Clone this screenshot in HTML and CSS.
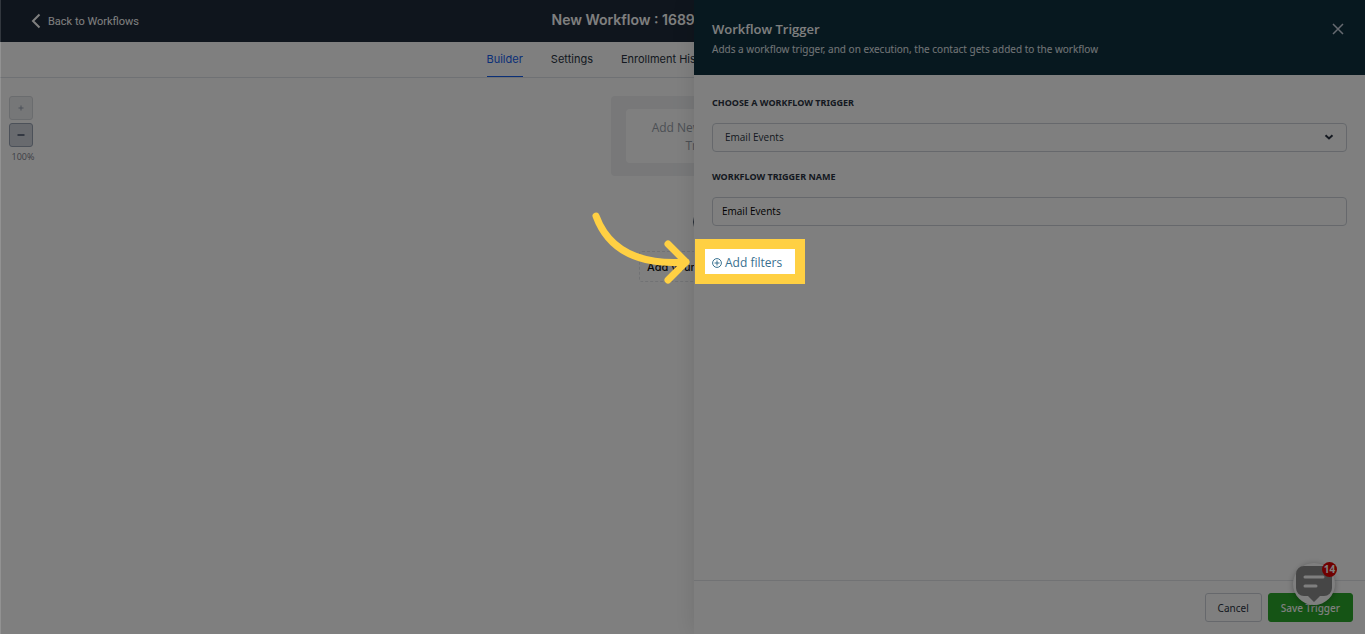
FILE: index.html
```html
<!DOCTYPE html>
<html lang="en">
<head>
<meta charset="utf-8">
<title>Workflow Trigger</title>
<link rel="stylesheet" href="styles.css">
</head>
<body>
<div class="app">
  <header class="topbar">
    <a class="back" href="#">
      <svg class="back-icon" viewBox="0 0 10 16" aria-hidden="true"><path d="M8.500 1.500 2 8l6.500 6.500"/></svg>
      Back to Workflows
    </a>
    <h1 class="title">New Workflow : 1689</h1>
  </header>
  <nav class="tabs">
    <div class="tab-list">
      <a class="tab tab-active" href="#">Builder</a>
      <a class="tab" href="#">Settings</a>
      <a class="tab" href="#">Enrollment History</a>
    </div>
  </nav>
  <main class="workspace">
    <div class="zoom-tools">
      <button class="zoom-btn zoom-disabled" type="button" aria-label="Zoom in" disabled><svg viewBox="0 0 8 8" aria-hidden="true"><path d="M4 1.500v5M1.500 4h5"/></svg></button>
      <button class="zoom-btn" type="button" aria-label="Zoom out"><svg viewBox="0 0 8 8" aria-hidden="true"><path d="M.5 4h7"/></svg></button>
      <span class="zoom-level">100%</span>
    </div>
    <div class="canvas">
      <div class="trigger-card"><button class="trigger-add" type="button">Add New Workflow Trigger</button></div>
      <button class="plus" type="button" aria-label="Add step"><svg viewBox="0 0 26 26" aria-hidden="true"><circle cx="13" cy="13" r="11.500"/><path d="M13 7v12M7 13h12"/></svg></button>
      <button class="action-add" type="button">Add your</button>
    </div>
  </main>
</div>

<aside class="drawer">
  <header class="drawer-head">
    <div>
      <h2 class="drawer-title">Workflow Trigger</h2>
      <p class="drawer-sub">Adds a workflow trigger, and on execution, the contact gets added to the workflow</p>
    </div>
    <button class="close" type="button" aria-label="Close"><svg viewBox="0 0 12 12" aria-hidden="true"><path d="m1 1 10 10M11 1 1 11"/></svg></button>
  </header>
  <form class="drawer-body">
    <label class="label" for="trigger">CHOOSE A WORKFLOW TRIGGER</label>
    <div class="select-wrap">
      <select class="field field-select" id="trigger"><option>Email Events</option></select>
      <svg class="chevron" viewBox="0 0 10 8" aria-hidden="true"><path d="m1.500 2.200 3.500 3.300 3.500-3.300"/></svg>
    </div>
    <label class="label" for="name">WORKFLOW TRIGGER NAME</label>
    <input class="field" id="name" type="text" value="Email Events">
    <div class="filters">
      <button class="add-filters" type="button">
        <svg class="filter-icon" viewBox="0 0 10 10" aria-hidden="true"><circle cx="5" cy="5" r="4.400"/><path d="M5 2.500v5M2.500 5h5"/></svg>
        Add filters
      </button>
      <div class="spotlight"></div>
      <svg class="arrow" viewBox="0 0 100 76" aria-hidden="true"><path d="M4 6C18 44 52 55 94 52M76 34l18 18-18 18"/></svg>
    </div>
  </form>
  <footer class="drawer-foot">
    <button class="btn" type="button">Cancel</button>
    <button class="btn btn-save" type="button">Save Trigger</button>
  </footer>
</aside>

<button class="chat" type="button" aria-label="Open chat">
  <svg viewBox="0 0 36 36" aria-hidden="true"><path d="M8 0h20a8 8 0 0 1 8 8v14a8 8 0 0 1-8 8h-4l-6 6-6-6H8a8 8 0 0 1-8-8V8a8 8 0 0 1 8-8z"/><path class="chat-line" d="M9 11h18M9 20h11"/></svg>
  <span class="chat-count">14</span>
</button>
</body>
</html>
```
FILE: styles.css
```css
* { box-sizing: border-box; }

body {
  margin: 0;
  min-height: 100vh;
  overflow: hidden;
  background: #fff;
  color: #2a3342;
  font-family: "Open Sans", "Noto Sans", sans-serif;
  font-size: 11px;
}

/* light hairline along the window edge, above the dimming */
body::after {
  content: "";
  position: absolute;
  top: 0;
  bottom: 0;
  left: 0;
  z-index: 12;
  width: 1px;
  background: rgba(255, 255, 255, .15);
}

button, input, select { font: inherit; color: inherit; }
button { padding: 0; border: 0; background: none; }
a { color: inherit; text-decoration: none; }
h1, h2, p { margin: 0; }
svg { display: block; fill: none; stroke: currentColor; }

.app {
  display: flex;
  flex-direction: column;
  min-height: 100vh;
}

.topbar {
  position: relative;
  display: flex;
  align-items: center;
  height: 42px;
  padding-left: 31px;
  background: #1e2a3a;
  color: #fff;
}
.back { display: flex; align-items: center; gap: 7px; font-family: Roboto, sans-serif; }
.back-icon { width: 10px; height: 16px; stroke-width: 2; }
.title {
  position: absolute;
  top: 10px;
  left: 50%;
  width: 262px;
  margin-left: -131px;
  font: 600 14px/20px Inter, sans-serif;
}

.tabs { border-bottom: 1px solid #dfe3e8; }
.tab-list {
  display: flex;
  gap: 28px;
  width: 392px;
  margin: 0 auto;
  font: 400 11px/34px Inter, sans-serif;
}
.tab { border-bottom: 1px solid transparent; white-space: nowrap; }
.tab-active { color: #155eef; border-color: #155eef; }

.workspace { display: flex; flex: 1; background: #fff; }
.zoom-tools {
  display: flex;
  flex-direction: column;
  align-items: center;
  gap: 3px;
  width: 45px;
  padding: 18px 12px 0 9px;
}
.zoom-btn {
  display: grid;
  place-items: center;
  width: 24px;
  height: 24px;
  border: 1px solid #98a2b3;
  border-radius: 3px;
  background: #d0d5dd;
}
.zoom-btn svg { width: 8px; height: 8px; stroke-width: 2; color: #667085; }
.zoom-disabled { background: #eceef0; border-color: #d5d8dc; }
.zoom-disabled svg { stroke-width: 1; color: #98a2b3; }
.zoom-level { padding-left: 4px; color: #7a808b; font-size: 9px; }

.canvas {
  display: flex;
  flex: 1;
  flex-direction: column;
  align-items: center;
  padding-top: 18px;
}
.trigger-card { width: 188px; padding: 13px 15px; border-radius: 4px; background: #f0f1f3; }
.trigger-add {
  width: 100%;
  height: 54px;
  padding: 2px 24px 0;
  border-radius: 4px;
  background: #fff;
  color: #98a0aa;
  font-size: 12px;
  line-height: 18px;
}
.plus { margin-top: 33px; color: #475467; }
.plus svg { width: 26px; height: 26px; stroke-width: 1; }
.action-add {
  width: 132px;
  height: 31px;
  margin-top: 16px;
  padding: 1px 0 0 7px;
  border: 1px dashed #e2e5e9;
  border-radius: 3px;
  color: #111;
  font: 500 11px Inter, sans-serif;
  text-align: left;
}

.drawer {
  position: absolute;
  top: 0;
  right: 0;
  bottom: 0;
  display: flex;
  flex-direction: column;
  width: 671px;
  max-width: 100%;
  background: #fff;
  box-shadow: 0 0 22px rgba(0, 0, 0, .12);
}
.drawer-head {
  display: flex;
  justify-content: space-between;
  height: 75px;
  padding: 19px 21px 0 18px;
  background: #0e303f;
  color: #fff;
}
.drawer-title { font-size: 13px; line-height: 20px; font-weight: 600; }
.drawer-sub { color: #e2e8ec; font: 10px/20px "Noto Sans", sans-serif; }
.close { width: 12px; height: 20px; color: #ccd4e0; }
.close svg { width: 12px; height: 12px; stroke-width: 1.5; }

.drawer-body {
  display: flex;
  flex: 1;
  flex-direction: column;
  padding: 20px 18px 0;
}
.label { margin-bottom: 13px; font: 700 9px/15px "Noto Sans", sans-serif; }
.field {
  width: 100%;
  height: 29px;
  padding: 0 9px 2px;
  border: 1px solid #ccd1d8;
  border-radius: 4px;
  background: #fff;
  color: #000;
  font-size: 10px;
}
.select-wrap { position: relative; margin-bottom: 17px; }
.field-select { display: block; padding: 0 12px 2px; appearance: none; color: #2a3342; }
.chevron {
  position: absolute;
  top: 10px;
  right: 13px;
  width: 10px;
  height: 8px;
  stroke-width: 2;
}
.filters { position: relative; align-self: flex-start; margin-top: 27px; }
.add-filters { display: flex; align-items: center; gap: 3px; color: #38708f; font-size: 12px; line-height: 20px; }
.filter-icon { width: 10px; height: 10px; stroke-width: 1; }

.spotlight {
  position: absolute;
  top: -14px;
  left: -17px;
  z-index: 10;
  width: 110px;
  height: 45px;
  border: 10px solid #ffd043;
  box-shadow: 0 0 0 2000px rgba(0, 0, 0, .5);
  pointer-events: none;
}
.arrow {
  position: absolute;
  top: -43px;
  left: -120px;
  z-index: 11;
  width: 100px;
  height: 76px;
  color: #ffd043;
  stroke-width: 7;
  stroke-linecap: round;
  stroke-linejoin: round;
}

.drawer-foot {
  display: flex;
  justify-content: flex-end;
  gap: 6px;
  padding: 12px;
  border-top: 1px solid #e2e5e9;
}
.btn {
  height: 29px;
  padding: 0 12px;
  border: 1px solid #ccd1d8;
  border-radius: 3px;
  background: #fff;
  font: 10px "Noto Sans", sans-serif;
}
.btn-save { border-color: #2aa82a; background: #2aa82a; color: #fff; font-weight: 500; }

.chat {
  position: absolute;
  right: 30px;
  bottom: 29px;
  z-index: 1;
  display: grid;
  place-items: center;
  width: 42px;
  height: 42px;
  border-radius: 50%;
  background: #fff;
  box-shadow: 0 1px 6px rgba(0, 0, 0, .3);
}
.chat svg { width: 36px; height: 36px; fill: #8c8c8c; stroke: none; }
.chat .chat-line { fill: none; stroke: #fff; stroke-width: 3; stroke-linecap: round; }
.chat-count {
  position: absolute;
  top: -1px;
  right: -2px;
  width: 15px;
  border-radius: 8px;
  background: #e00000;
  color: #fff;
  font-size: 10px;
  font-weight: 700;
  line-height: 15px;
}
```
